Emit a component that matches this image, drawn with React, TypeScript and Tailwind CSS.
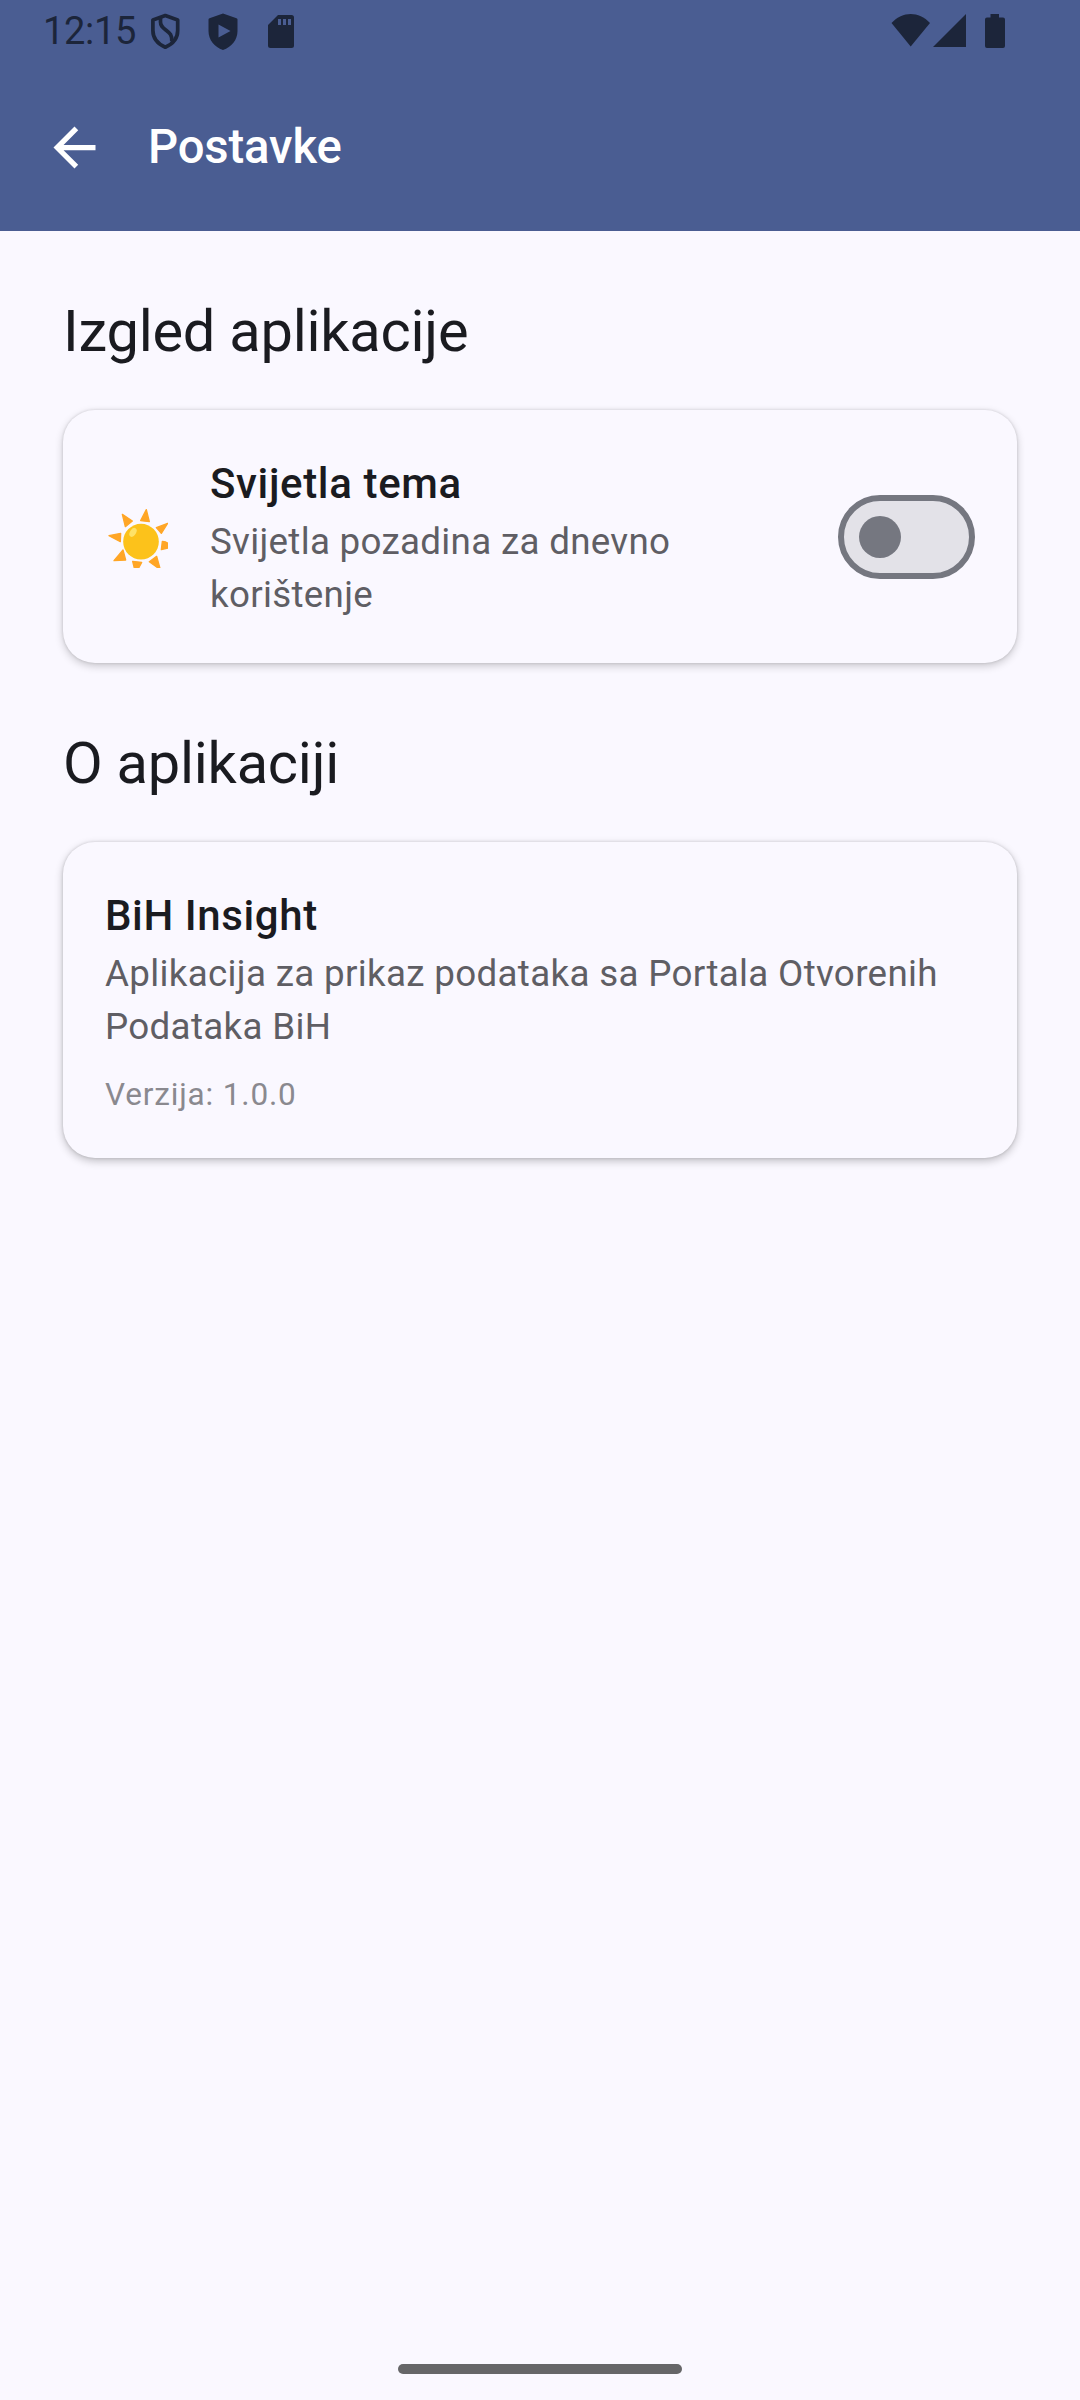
export default function App() {
  return (
    <div className="flex h-[2400px] w-[1080px] flex-col overflow-hidden bg-[#faf8ff] font-['Roboto',sans-serif] text-[#1a1b20]">
      <header className="h-[231px] bg-[#4a5d92]">
        <div className="flex h-[63px] items-start text-[#1c253a]">
          <div className="ml-[43px] mt-[8px] w-[107px] whitespace-nowrap text-[38px] leading-[46px] tracking-[-0.3px]">12:15</div>
          <svg className="mt-[13px] h-[37px] w-[31px]" viewBox="0 0 31 37" fill="none" stroke="currentColor" strokeWidth="3.7" strokeLinejoin="round">
            <path d="M15.300 2.600 27.700 7v10.500c0 7.500-5 13.500-12.400 16.700C8 31 2.900 25 2.900 17.500V7Z" />
            <path d="M10.500 4.500V9c0 4 2 5.500 5 7.800 4.500 3.500 6.500 4.700 6.300 11.500" />
          </svg>
          <svg className="ml-[27px] mt-[13px] h-[38px] w-[31px]" viewBox="0 0 31 38" fill="currentColor">
            <path fillRule="evenodd" d="M15 .5 28.500 5.200A1.500 1.500 0 0 1 29.500 6.600V18c0 9-6 16-14.500 19C6.500 34 .5 27 .5 18V6.600A1.500 1.500 0 0 1 1.500 5.200ZM10.500 11.500v13l12-6.500Z" />
          </svg>
          <svg className="ml-[29px] mt-[15px] h-[33px] w-[27px]" viewBox="0 0 27 33" fill="currentColor">
            <path fillRule="evenodd" d="M10 0h13.500a2.500 2.500 0 0 1 2.500 2.500v28a2.500 2.500 0 0 1-2.500 2.500h-21a2.500 2.500 0 0 1-2.500-2.500V10ZM10 4v6h3V4Zm5 0v6h3V4Zm5 0v6h3V4Z" />
          </svg>
          <svg className="ml-auto mt-[14px] h-[33px] w-[40px]" viewBox="0 0 40 33" fill="currentColor">
            <path d="M.5 9C6 3 13 0 19.700 0S33.500 3 39 9L19.700 32.500Z" />
          </svg>
          <svg className="ml-[2px] mt-[14px] h-[33px] w-[34px]" viewBox="0 0 34 33" fill="currentColor">
            <path d="M33 0v33H0Z" />
          </svg>
          <svg className="ml-[18px] mr-[75px] mt-[14px] h-[34px] w-[20px]" viewBox="0 0 20 34" fill="currentColor">
            <path d="M5.500 0h8.500v3.500h4A2 2 0 0 1 20 5.500V32a2 2 0 0 1-2 2H2a2 2 0 0 1-2-2V5.500a2 2 0 0 1 2-2h3.500Z" />
          </svg>
        </div>
        <div className="flex h-[168px] items-center">
          <svg className="ml-[43px] h-[63px] w-[63px]" viewBox="0 0 24 24" fill="#fff">
            <path d="M20 11H7.830l5.590-5.590L12 4l-8 8 8 8 1.410-1.410L7.830 13H20z" />
          </svg>
          <h1 className="ml-[42px] text-[47.25px] font-medium leading-[63px] tracking-[-0.15px] text-white">Postavke</h1>
        </div>
      </header>
      <main className="flex flex-col px-[63px] pt-[63px]">
        <h2 className="h-[74px] text-[57.75px] leading-[75px] tracking-[-0.23px]">Izgled aplikacije</h2>
        <section className="mt-[42px] flex h-[253px] items-center rounded-[32px] bg-[#faf8ff] px-[42px] shadow-[0_3px_8px_rgba(0,0,0,0.2),0_0_3px_rgba(0,0,0,0.14)]">
          <svg className="h-[63px] w-[63px]" viewBox="15 15 189 189">
            <g fill="#ffa626" stroke="#ffa626" strokeWidth="4" strokeLinejoin="round">
              <path d="m67 43 30 20-21 17Z" />
              <path d="m139 29 9 36-26-3Z" />
              <path d="m169 83 34-13-19 30Z" />
              <path d="m184 149 3-25 10 2 24 14Z" />
              <path d="m148 185 22-16 11 40Z" />
              <path d="m98 184 27 3-18 34Z" />
              <path d="m69 150 8 30-35 2Z" />
              <path d="m27 107 35-7-1 25Z" />
            </g>
            <circle cx="123" cy="125" r="53.500" fill="#fcc21b" />
            <ellipse cx="99" cy="97" rx="9" ry="14.500" transform="rotate(32 99 97)" fill="#fee268" />
          </svg>
          <div className="ml-[42px] w-[570px]">
            <h3 className="text-[42px] font-medium leading-[63px] tracking-[0.64px]">Svijetla tema</h3>
            <p className="text-[36.75px] leading-[53px] tracking-[0.3px] text-[#5f5e64]">Svijetla pozadina za dnevno korištenje</p>
          </div>
          <button aria-label="Tema" className="ml-auto mt-px flex h-[84px] w-[137px] items-center rounded-full border-[6px] border-[#757780] bg-[#e3e2e8] pl-[15px]">
            <span className="h-[42px] w-[42px] rounded-full bg-[#757780]" />
          </button>
        </section>
        <h2 className="mt-[63px] h-[74px] text-[57.75px] leading-[75px] tracking-[-0.23px]">O aplikaciji</h2>
        <section className="mt-[42px] h-[316px] rounded-[32px] bg-[#faf8ff] p-[42px] shadow-[0_3px_8px_rgba(0,0,0,0.24),0_0_3px_rgba(0,0,0,0.14)]">
          <h3 className="text-[42px] font-medium leading-[63px] tracking-[0.6px]">BiH Insight</h3>
          <p className="text-[36.75px] leading-[53px] tracking-[0.32px] text-[#5f5e64]">Aplikacija za prikaz podataka sa Portala Otvorenih Podataka BiH</p>
          <p className="mt-[21px] text-[31.5px] leading-[42px] tracking-[0.84px] text-[#8a898f]">Verzija: 1.0.0</p>
        </section>
      </main>
      <div className="mx-auto mb-[26px] mt-auto h-[10px] w-[284px] rounded-full bg-[#666668]" />
    </div>
  );
}
